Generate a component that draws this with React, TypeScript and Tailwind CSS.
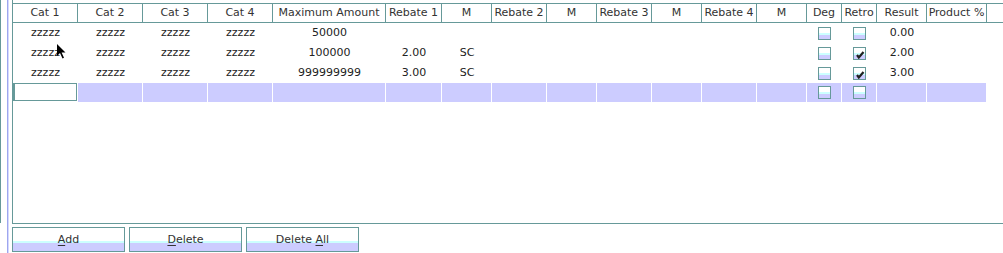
const teal = "border-[#669999]";

interface Column {
  label: string;
  w: string;
}

const columns: Column[] = [
  { label: "Cat 1", w: "w-[65px]" },
  { label: "Cat 2", w: "w-[65px]" },
  { label: "Cat 3", w: "w-[65px]" },
  { label: "Cat 4", w: "w-[65px]" },
  { label: "Maximum Amount", w: "w-[113px]" },
  { label: "Rebate 1", w: "w-[56px]" },
  { label: "M", w: "w-[50px]" },
  { label: "Rebate 2", w: "w-[55px]" },
  { label: "M", w: "w-[50px]" },
  { label: "Rebate 3", w: "w-[55px]" },
  { label: "M", w: "w-[50px]" },
  { label: "Rebate 4", w: "w-[55px]" },
  { label: "M", w: "w-[50px]" },
  { label: "Deg", w: "w-[35px]" },
  { label: "Retro", w: "w-[35px]" },
  { label: "Result", w: "w-[50px]" },
  { label: "Product %", w: "w-[60px]" },
];

type Cell = string | boolean;

const rows: Cell[][] = [
  ["zzzzz", "zzzzz", "zzzzz", "zzzzz", "50000", "", "", "", "", "", "", "", "", false, false, "0.00", ""],
  ["zzzzz", "zzzzz", "zzzzz", "zzzzz", "100000", "2.00", "SC", "", "", "", "", "", "", false, true, "2.00", ""],
  ["zzzzz", "zzzzz", "zzzzz", "zzzzz", "999999999", "3.00", "SC", "", "", "", "", "", "", false, true, "3.00", ""],
];

function CheckBox({ checked }: { checked: boolean }) {
  return (
    <div className="relative h-[13px] w-[13px] border border-[#669999] bg-[linear-gradient(to_bottom,#ffffff_0%,#ffffff_45%,#ccffff_45%,#ccffff_64%,#ccccff_64%,#ccccff_100%)]">
      {checked && (
        <svg className="absolute left-[1px] top-[1px]" width="10" height="10" viewBox="0 0 10 10">
          <path d="M2 6 L3.8 8.5 L8.5 3" fill="none" stroke="#222" strokeWidth="2.2" />
        </svg>
      )}
    </div>
  );
}

function ActionButton({ pre, mn, post }: { pre: string; mn: string; post: string }) {
  return (
    <button
      type="button"
      className={`h-[25px] w-[113px] border ${teal} bg-[linear-gradient(to_bottom,#ffffff_0%,#ffffff_56%,#ccffff_56%,#ccffff_65%,#ccccff_65%,#ccccff_100%)] text-[11px] leading-[23px] text-[#333]`}
    >
      {pre}
      <u className="underline-offset-2">{mn}</u>
      {post}
    </button>
  );
}

export default function App() {
  return (
    <div className="flex h-[253px] w-[1003px] overflow-hidden bg-white font-['DejaVu_Sans',sans-serif] text-[11px] text-[#333]">
      <div className="h-[223px] w-px bg-[#669999]" />
      <div className="ml-[6px] h-full w-[2px] border-l border-[#9ea6ee] bg-[#d4d9ff]" />
      <div className="ml-[3px] flex flex-1 flex-col">
        <div className={`relative h-[224px] border-b border-l ${teal} pt-[3px]`}>
          <div className={`flex border-y ${teal}`}>
            {columns.map((c, i) => (
              <div key={i} className={`${c.w} h-[18px] shrink-0 border-r ${teal} text-center leading-[18px]`}>
                {c.label}
              </div>
            ))}
          </div>
          {rows.map((r, ri) => (
            <div key={ri} className="flex h-[20px]">
              {columns.map((c, i) => (
                <div key={i} className={`${c.w} flex shrink-0 items-center justify-center text-[#222]`}>
                  {typeof r[i] === "boolean" ? <CheckBox checked={r[i] as boolean} /> : r[i]}
                </div>
              ))}
            </div>
          ))}
          <div className="flex h-[20px]">
            {columns.map((c, i) => (
              <div
                key={i}
                className={`${c.w} flex shrink-0 items-center justify-center border-r border-b border-white ${i === 0 ? "bg-white" : "bg-[#ccccff]"}`}
              >
                {i === 0 && <div className={`h-[18px] w-full self-start border border-l-2 ${teal} bg-white`} />}
                {(c.label === "Deg" || c.label === "Retro") && <CheckBox checked={false} />}
              </div>
            ))}
          </div>
          {/* mouse pointer */}
          <svg className="absolute left-[44px] top-[44px]" width="10" height="16" viewBox="0 0 10 16">
            <path d="M0 0 L0 12 L3 9 L5.5 14.5 L7 13.8 L4.6 8.4 L8.5 8.4 Z" fill="#000" />
          </svg>
        </div>
        <div className="mt-[3px] flex gap-[4px]">
          <ActionButton pre="" mn="A" post="dd" />
          <ActionButton pre="" mn="D" post="elete" />
          <ActionButton pre="Delete " mn="A" post="ll" />
        </div>
      </div>
    </div>
  );
}
